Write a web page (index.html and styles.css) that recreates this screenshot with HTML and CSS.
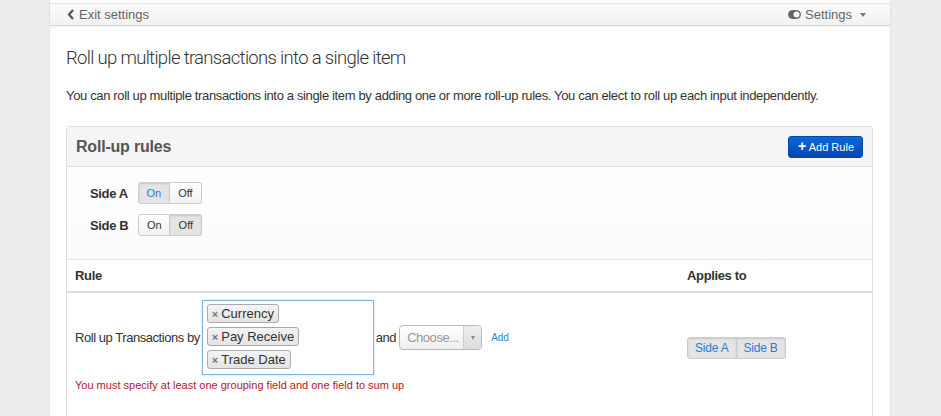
FILE: index.html
```html
<!DOCTYPE html>
<html lang="en">
<head>
  <meta charset="UTF-8" />
  <title>Roll-up settings</title>
  <link rel="stylesheet" href="styles.css">
</head>
<body>
  <div class="page">
    <div class="topbar">
      <a class="exit" href="#">
        <svg width="8" height="11" viewBox="0 0 8 11"><polyline points="6,1 2,5.5 6,10" fill="none" stroke="#555" stroke-width="2.2"/></svg>
        Exit settings
      </a>
      <a class="settings" href="#">
        <svg width="13" height="9" viewBox="0 0 13 9"><rect x="0.5" y="0.5" width="12" height="8" rx="4" fill="#666" stroke="#666"/><circle cx="8.5" cy="4.5" r="3" fill="#fff"/></svg>
        Settings
        <span class="caret"></span>
      </a>
    </div>

    <div class="content">
      <h1>Roll up multiple transactions into a single item</h1>
      <p class="lead">You can roll up multiple transactions into a single item by adding one or more roll-up rules. You can elect to roll up each input independently.</p>

      <div class="panel">
        <div class="panel-head">
          <h2>Roll-up rules</h2>
          <button class="btn-primary"><span class="plus">+</span> Add Rule</button>
        </div>

        <div class="sides">
          <div class="side-row">
            <span class="side-label">Side A</span>
            <div class="btn-group toggle">
              <button class="btn active blue">On</button>
              <button class="btn">Off</button>
            </div>
          </div>
          <div class="side-row">
            <span class="side-label">Side B</span>
            <div class="btn-group toggle">
              <button class="btn">On</button>
              <button class="btn active">Off</button>
            </div>
          </div>
        </div>

        <table class="rules">
          <thead>
            <tr>
              <th>Rule</th>
              <th class="applies">Applies to</th>
            </tr>
          </thead>
          <tbody>
            <tr>
              <td>
                <div class="rule-line">
                  <span>Roll up Transactions by</span>
                  <div class="multi">
                    <span class="tag"><span class="x">×</span>Currency</span>
                    <span class="tag"><span class="x">×</span>Pay Receive</span>
                    <span class="tag"><span class="x">×</span>Trade Date</span>
                  </div>
                  <span>and</span>
                  <div class="select">
                    <span class="placeholder">Choose...</span>
                    <span class="arrow"><span class="caret small"></span></span>
                  </div>
                  <a class="add" href="#">Add</a>
                </div>
                <div class="error">You must specify at least one grouping field and one field to sum up</div>
              </td>
              <td class="applies">
                <div class="btn-group">
                  <button class="btn active blue">Side A</button>
                  <button class="btn active blue">Side B</button>
                </div>
              </td>
            </tr>
          </tbody>
        </table>
      </div>
    </div>
  </div>
</body>
</html>
```

FILE: styles.css
```css
* { box-sizing: border-box; }
body {
  margin: 0;
  background: #ededed;
  font-family: "Liberation Sans", Arial, sans-serif;
  font-size: 13px;
  letter-spacing: -0.35px;
  color: #333;
  height: 416px;
  overflow: hidden;
}
.page {
  width: 842px;
  margin-left: 49px;
  background: #fff;
  padding-top: 3px;
  min-height: 416px;
  border-left: 1px solid #e4e4e4;
  border-right: 1px solid #e4e4e4;
}
.topbar {
  height: 23px;
  display: flex;
  justify-content: space-between;
  align-items: center;
  padding: 0 24px 0 17px;
  background: linear-gradient(#fbfbfb, #f1f1f1);
  border-top: 1px solid #e2e2e2;
  border-bottom: 1px solid #d6d6d6;
  box-shadow: 0 1px 2px rgba(0,0,0,0.06);
}
.topbar a {
  color: #666;
  text-decoration: none;
  font-size: 13px;
  letter-spacing: 0;
  display: flex;
  align-items: center;
  gap: 4px;
}
.settings { gap: 3px; }
.caret {
  display: inline-block;
  width: 0;
  height: 0;
  border-left: 3px solid transparent;
  border-right: 3px solid transparent;
  border-top: 4px solid #777;
  margin-left: 4px;
}
.content { padding: 0 17px 0 16px; }
h1 {
  margin: 20px 0 0;
  font-family: Roboto, "Liberation Sans", sans-serif;
  font-weight: 300;
  font-size: 18.5px;
  letter-spacing: -0.68px;
  line-height: 24px;
  color: #333;
}
.lead {
  margin: 17px 0 0;
  line-height: 18px;
}
.panel {
  margin-top: 21px;
  border: 1px solid #ddd;
  border-radius: 4px 4px 0 0;
  border-bottom: none;
}
.panel-head {
  height: 40px;
  display: flex;
  align-items: center;
  justify-content: space-between;
  padding: 0 9px 0 9px;
  background: #f5f5f5;
  border-bottom: 1px solid #ddd;
}
h2 {
  margin: 0;
  font-size: 16px;
  font-weight: bold;
  letter-spacing: -0.2px;
  color: #555;
}
.btn-primary {
  height: 22px;
  padding: 0 8px 0 9px;
  font-family: inherit;
  font-size: 11px;
  color: #fff;
  border: 1px solid #0048a8;
  border-radius: 3px;
  background: linear-gradient(#0a6ad4, #0047b5);
}
.plus { font-weight: bold; font-size: 14px; line-height: 10px; }
.sides {
  padding: 15px 23px 23px;
  background: linear-gradient(#fefefe, #fbfbfb);
  border-bottom: 1px solid #e3e3e3;
  display: flex;
  flex-direction: column;
  gap: 10px;
}
.side-row {
  display: flex;
  align-items: center;
  gap: 10px;
}
.side-label {
  font-weight: bold;
  white-space: nowrap;
  min-width: 37px;
}
.btn-group { display: inline-flex; }
.btn {
  height: 22px;
  padding: 0 9px;
  font-family: inherit;
  font-size: 11px;
  letter-spacing: 0;
  color: #333;
  background: linear-gradient(#fff, #f2f2f2);
  border: 1px solid #ccc;
  border-radius: 0;
}
.toggle .btn { width: 32px; padding: 0; }
.btn-group .btn:first-child { border-radius: 3px 0 0 3px; }
.btn-group .btn:last-child { border-radius: 0 3px 3px 0; border-left: none; }
.btn.active {
  background: #e4e4e4;
  box-shadow: inset 0 1px 2px rgba(0,0,0,0.12);
}
.btn.blue { color: #2a7bd8; }
.applies .btn { height: 22px; padding: 0 7px; font-size: 12px; letter-spacing: -0.2px; }
.rules {
  width: 100%;
  border-collapse: collapse;
}
.rules th {
  text-align: left;
  height: 32px;
  padding: 0 8px;
  border-bottom: 2px solid #ddd;
  font-size: 13px;
  color: #333;
}
.rules th.applies { width: 193px; }
.rules td {
  padding: 7px 8px 40px;
  vertical-align: top;
}
.rules td.applies { vertical-align: top; padding-top: 44px; }
.rule-line {
  display: flex;
  align-items: center;
  gap: 2px;
  letter-spacing: -0.45px;
}
.multi {
  width: 172px;
  height: 75px;
  border: 1px solid #7fb0e6;
  padding: 3px 4px;
  display: flex;
  flex-direction: column;
  align-items: flex-start;
  gap: 4px;
  box-shadow: 0 0 2px rgba(82,168,236,0.4);
}
.tag {
  font-size: 13px;
  letter-spacing: 0;
  height: 19px;
  line-height: 17px;
  padding: 0 4px 0 4px;
  border: 1px solid #aaa;
  border-radius: 3px;
  background: linear-gradient(#f4f4f4, #e4e4e4);
  color: #333;
}
.x {
  font-size: 11px;
  color: #777;
  font-weight: bold;
  margin-right: 3px;
}
.select {
  display: flex;
  width: 83px;
  height: 25px;
  margin-left: 1px;
  border: 1px solid #bbb;
  border-radius: 4px;
  background: linear-gradient(#fff, #eee);
}
.placeholder {
  flex: 1;
  padding-left: 7px;
  line-height: 23px;
  color: #999;
}
.arrow {
  width: 18px;
  border-left: 1px solid #ccc;
  display: flex;
  align-items: center;
  justify-content: center;
  background: linear-gradient(#eee, #ddd);
  border-radius: 0 3px 3px 0;
}
.caret.small { margin: 0; border-top-color: #888; border-width: 4px 2px 0; }
.add {
  margin-left: 7px;
  font-size: 10px;
  letter-spacing: 0;
  color: #1a8ad8;
  text-decoration: none;
}
.error {
  margin-top: 4px;
  font-size: 11px;
  letter-spacing: 0;
  color: #b0201e;
}
```
